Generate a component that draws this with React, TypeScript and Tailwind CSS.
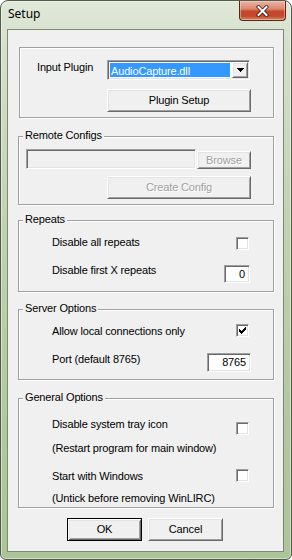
import React from "react";

const sunken =
  "border border-t-[#a0a0a0] border-l-[#a0a0a0] border-r-white border-b-white shadow-[inset_1px_1px_0_#696969,inset_-1px_-1px_0_#e3e3e3]";
const raised =
  "border border-t-white border-l-white border-r-[#696969] border-b-[#696969] shadow-[inset_1px_1px_0_#e3e3e3,inset_-1px_-1px_0_#a0a0a0]";

function GroupBox({
  title,
  className,
  children,
}: {
  title?: string;
  className: string;
  children?: React.ReactNode;
}) {
  return (
    <div
      className={`relative border border-[#a0a0a0] shadow-[1px_1px_0_#ffffff,inset_1px_1px_0_#ffffff] ${className}`}
    >
      {title && (
        <span className="absolute left-[4px] top-[-8px] bg-[#f0f0f0] px-[2px] leading-[13px] whitespace-nowrap">
          {title}
        </span>
      )}
      {children}
    </div>
  );
}

function Checkbox({ checked, className }: { checked?: boolean; className: string }) {
  return (
    <div className={`w-[13px] h-[13px] shrink-0 bg-white ${sunken} ${className}`}>
      {checked && (
        <svg width="11" height="11" viewBox="0 0 11 11" shapeRendering="crispEdges" className="block">
          <path
            d="M8 2h1v1h-1z M7 3h2v1h-2z M2 4h1v1h-1z M6 4h3v1h-3z M2 5h2v1h-2z M5 5h3v1h-3z M2 6h5v1h-5z M3 7h3v1h-3z M4 8h1v1h-1z"
            fill="#000"
          />
        </svg>
      )}
    </div>
  );
}

function Button({
  children,
  className,
  disabled,
  isDefault,
}: {
  children: React.ReactNode;
  className: string;
  disabled?: boolean;
  isDefault?: boolean;
}) {
  const frame = isDefault
    ? "border border-black shadow-[inset_1px_1px_0_#ffffff,inset_-1px_-1px_0_#696969,inset_2px_2px_0_#e3e3e3,inset_-2px_-2px_0_#a0a0a0]"
    : raised;
  return (
    <div
      className={`flex items-center justify-center bg-[#f0f0f0] leading-[13px] ${frame} ${
        disabled ? "text-[#a0a0a0] [text-shadow:1px_1px_0_#ffffff]" : "text-black"
      } ${className}`}
    >
      {children}
    </div>
  );
}

function NumBox({ value, className }: { value: string; className: string }) {
  return (
    <div className={`bg-white text-right pr-[4px] pt-[2px] leading-[13px] shrink-0 ${sunken} ${className}`}>
      {value}
    </div>
  );
}

export default function App() {
  return (
    <div className="w-[292px] h-[560px] overflow-hidden bg-white">
      <div className="w-[292px] h-[560px] flex flex-col rounded-t-[8px] rounded-b-[6px] border border-[#4f5d4a] bg-[linear-gradient(180deg,#e0e8da_0%,#d5e0cb_8%,#c0d3b0_40%,#b2c89e_75%,#adc498_100%)] shadow-[inset_0_0_0_1px_rgba(255,255,255,0.45)]">
        {/* Title bar */}
        <div className="h-[28px] flex justify-between items-start shrink-0">
          <span className="pl-[7px] pt-[5px] text-[12px] leading-[16px] text-black font-['Noto_Sans','Open_Sans',sans-serif]">
            Setup
          </span>
          <div className="mr-[5px] w-[47px] h-[20px] flex items-center justify-center rounded-b-[4px] border border-t-0 border-[#5b2418] bg-[linear-gradient(180deg,#eab4a5_0%,#dd8a74_40%,#c7442a_55%,#c24a2e_80%,#d98a62_100%)] shadow-[inset_0_0_0_1px_rgba(255,220,200,0.45)]">
            <svg width="13" height="12" viewBox="0 0 13 12">
              <path d="M2.5 2 L10.5 10 M10.5 2 L2.5 10" stroke="#3b1710" strokeWidth="3.6" strokeLinecap="square" />
              <path d="M2.5 2 L10.5 10 M10.5 2 L2.5 10" stroke="#ffffff" strokeWidth="2" strokeLinecap="square" />
            </svg>
          </div>
        </div>

        {/* Client area */}
        <div className="ml-[6px] w-[277px] h-[523px] shrink-0 border border-[#7b8a74] bg-[#f0f0f0] text-[11px] leading-[13px] tracking-[-0.15px] text-black font-['Liberation_Sans',Arial,sans-serif] flex flex-col">
          {/* Input plugin box */}
          <GroupBox className="ml-[11px] mt-[17px] w-[255px] h-[71px]">
            <div className="pl-[17px] pt-[12px] flex items-start">
              <span className="w-[70px] mt-[1px] shrink-0">Input Plugin</span>
              <div className={`w-[143px] h-[20px] bg-white p-[1px] flex ${sunken}`}>
                <div className="flex-1 bg-[#3399ff] text-white pl-[1px] pt-[2px] leading-[13px] m-[1px] mr-[2px]">
                  AudioCapture.dll
                </div>
                <div className={`w-[16px] bg-[#f0f0f0] flex items-center justify-center ${raised}`}>
                  <svg width="7" height="4" viewBox="0 0 7 4" shapeRendering="crispEdges">
                    <path d="M0 0h7v1h-7z M1 1h5v1h-5z M2 2h3v1h-3z M3 3h1v1h-1z" fill="#000" />
                  </svg>
                </div>
              </div>
            </div>
            <Button className="ml-[87px] mt-[9px] w-[144px] h-[23px]">Plugin Setup</Button>
          </GroupBox>

          {/* Remote Configs */}
          <GroupBox title="Remote Configs" className="ml-[10px] mt-[18px] w-[256px] h-[69px]">
            <div className="pl-[7px] pt-[12px] flex items-start">
              <div className={`w-[170px] h-[20px] bg-[#f0f0f0] ${sunken}`} />
              <Button disabled className="ml-[1px] mt-[2px] w-[54px] h-[18px]">
                Browse
              </Button>
            </div>
            <Button disabled className="ml-[88px] mt-[7px] w-[144px] h-[23px]">
              Create Config
            </Button>
          </GroupBox>

          {/* Repeats */}
          <GroupBox title="Repeats" className="ml-[10px] mt-[15px] w-[256px] h-[72px]">
            <div className="pl-[33px] flex items-start h-[29px]">
              <span className="mt-[15px] w-[184px] shrink-0">Disable all repeats</span>
              <Checkbox className="mt-[16px]" />
            </div>
            <div className="pl-[33px] flex items-start">
              <span className="mt-[14px] w-[172px] shrink-0">Disable first X repeats</span>
              <NumBox value="0" className="mt-[15px] w-[26px] h-[18px]" />
            </div>
          </GroupBox>

          {/* Server Options */}
          <GroupBox title="Server Options" className="ml-[10px] mt-[17px] w-[256px] h-[71px]">
            <div className="pl-[33px] flex items-start h-[29px]">
              <span className="mt-[15px] w-[184px] shrink-0">Allow local connections only</span>
              <Checkbox checked className="mt-[14px]" />
            </div>
            <div className="pl-[33px] flex items-start">
              <span className="mt-[14px] w-[155px] shrink-0">Port (default 8765)</span>
              <NumBox value="8765" className="mt-[14px] w-[44px] h-[19px]" />
            </div>
          </GroupBox>

          {/* General Options */}
          <GroupBox title="General Options" className="ml-[10px] mt-[18px] w-[256px] h-[110px]">
            <div className="pl-[33px] flex flex-col">
              <div className="flex items-start">
                <span className="mt-[19px] w-[184px] shrink-0">Disable system tray icon</span>
                <Checkbox className="mt-[23px]" />
              </div>
              <span className="mt-[7px]">(Restart program for main window)</span>
              <div className="flex items-start">
                <span className="mt-[15px] w-[184px] shrink-0">Start with Windows</span>
                <Checkbox className="mt-[14px]" />
              </div>
              <span className="mt-[9px]">(Untick before removing WinLIRC)</span>
            </div>
          </GroupBox>

          {/* Buttons */}
          <div className="mt-[10px] flex pl-[59px] gap-[6px]">
            <Button isDefault className="w-[75px] h-[23px]">
              OK
            </Button>
            <Button className="w-[75px] h-[23px]">Cancel</Button>
          </div>
        </div>
      </div>
    </div>
  );
}
